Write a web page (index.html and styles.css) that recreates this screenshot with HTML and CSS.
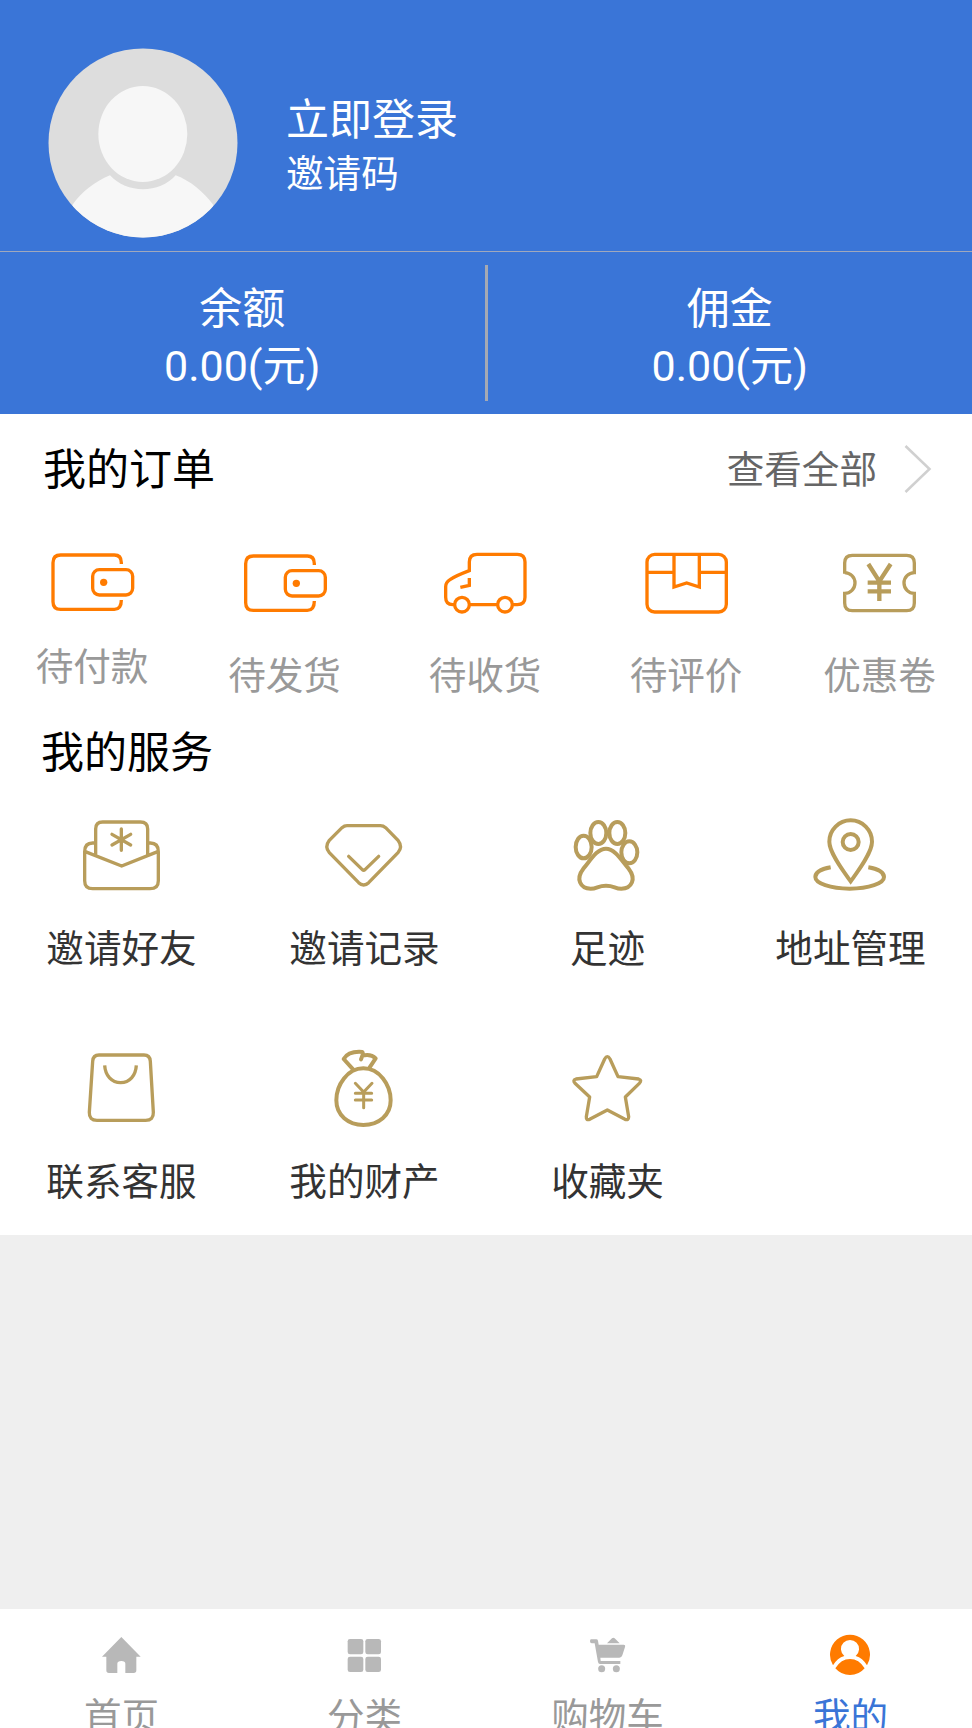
FILE: index.html
```html
<!DOCTYPE html>
<html lang="zh-CN">
<head>
<meta charset="utf-8">
<title>我的</title>
<link rel="stylesheet" href="styles.css">
</head>
<body>
<div class="page">
  <header class="profile">
    <svg class="avatar" viewBox="145 144 570 570">
      <defs><clipPath id="disc"><circle cx="430" cy="429" r="283.500"/></clipPath></defs>
      <g clip-path="url(#disc)">
        <rect x="145" y="144" width="570" height="570" fill="#ddd"/>
        <ellipse cx="429.500" cy="402" rx="133.500" ry="144" fill="#f7f7f7"/>
        <path d="M218 615C247 575 285 545 331 526C356 554 393 568 430 568C467 568 504 554 528 526C573 543 611 575 641 615V720H218Z" fill="#f7f7f7"/>
      </g>
    </svg>
    <div class="who">
      <div class="login">立即登录</div>
      <div class="code">邀请码</div>
    </div>
  </header>
  <section class="wallet">
    <div class="sum"><div>余额</div><div class="amount">0.00(元)</div></div>
    <div class="rule"></div>
    <div class="sum"><div>佣金</div><div class="amount">0.00(元)</div></div>
  </section>
  <main class="panel">
    <div class="head">
      <h2 class="title">我的订单</h2>
      <a class="all"><span>查看全部</span>
        <svg class="chevron" viewBox="0 0 30 50"><path d="M3.500 2L27.500 25L3.500 48" fill="none" stroke="#d0d0d0" stroke-width="2.500"/></svg>
      </a>
    </div>
    <nav class="orders">
      <div class="order first">
        <svg class="oicon" viewBox="141 87 270 198"><path d="M364 132V128Q364 105 343 105H182Q159 105 159 128V245Q159 268 182 268H343Q364 268 364 240"/><rect x="278" y="149" width="120" height="76" rx="20"/><circle class="dot" cx="311" cy="187" r="11"/></svg>
        <span>待付款</span>
      </div>
      <div class="order">
        <svg class="oicon" viewBox="720 84 270 198"><path d="M943 132V128Q943 105 922 105H760Q737 105 737 128V245Q737 268 760 268H922Q943 268 943 240"/><rect x="856" y="149" width="120" height="76" rx="20"/><circle class="dot" cx="889" cy="187" r="11"/></svg>
        <span>待发货</span>
      </div>
      <div class="order">
        <svg class="oicon" viewBox="1322 87 270 198"><path d="M1365 254H1360Q1339 254 1339 232V200Q1339 187 1352 179Q1370 167 1410 152V126Q1410 103 1433 103H1554Q1577 103 1577 126V232Q1577 254 1554 254H1540M1411 254H1493M1410 174V196L1383 202"/><circle cx="1388" cy="254" r="22"/><circle cx="1517" cy="254" r="22"/></svg>
        <span>待收货</span>
      </div>
      <div class="order">
        <svg class="oicon" viewBox="507 87 270 198"><rect x="525" y="103" width="238" height="173" rx="23"/><path d="M525 157H606M682 157H763M606 103V201L644 189L682 201V103"/></svg>
        <span>待评价</span>
      </div>
      <div class="order">
        <svg class="oicon gold" viewBox="1089 87 270 198"><path d="M1118 161V129Q1118 106 1141 106H1304Q1327 106 1327 129V158A31 31 0 0 0 1327 220V249Q1327 272 1304 272H1141Q1118 272 1118 249V220A31 31 0 0 0 1118 158Z"/><path class="yen" d="M1189 132L1222 184L1256 132M1222 184V243M1187 188H1257M1187 214H1257"/></svg>
        <span>优惠卷</span>
      </div>
    </nav>
    <h2 class="title services-title">我的服务</h2>
    <nav class="services">
      <div class="service">
        <svg class="sicon" viewBox="230 30 270 270"><path d="M286 165V87Q286 66 307 66H420Q442 66 442 87V165M286 129H277Q253 129 253 155V242Q253 266 277 266H449Q474 266 474 242V155Q474 129 450 129H442M253 154L364 198L474 154"/><path stroke-linecap="round" d="M363 87V151M335 103L391 135M391 103L335 135"/></svg>
        <span>邀请好友</span>
      </div>
      <div class="service">
        <svg class="sicon" viewBox="959 30 270 270"><path d="M1040 77H1140Q1149 77 1156 83L1193 121Q1208 141 1193 158L1105 248Q1090 262 1075 248L987 158Q972 141 987 121L1025 83Q1032 77 1040 77Z"/><path stroke-linecap="round" stroke-linejoin="round" d="M1045 169L1086 209Q1090 212 1094 209L1135 169"/></svg>
        <span>邀请记录</span>
      </div>
      <div class="service">
        <svg class="sicon bold" viewBox="272 30 270 270"><ellipse cx="334" cy="141" rx="24" ry="34"/><ellipse cx="378" cy="99" rx="24" ry="33"/><ellipse cx="435" cy="99" rx="24" ry="33"/><ellipse cx="471" cy="157" rx="24" ry="33"/><path d="M401 146C374 146 355 180 333 206C309 237 324 266 355 266C375 266 376 257 401 257C426 257 427 266 447 266C478 266 493 237 469 206C447 180 427 146 401 146Z"/></svg>
        <span>足迹</span>
      </div>
      <div class="service">
        <svg class="sicon bold" viewBox="1001 30 270 270"><path d="M1135 244C1115 216 1071 159 1071 125A64 64 0 0 1 1199 125C1199 159 1155 216 1135 244Z"/><circle cx="1135" cy="126" r="24"/><path d="M1075 202C1047 207 1029 217 1029 231C1029 250 1074 266 1132 266C1190 266 1235 250 1235 231C1235 217 1217 207 1188 202"/></svg>
        <span>地址管理</span>
      </div>
      <div class="service">
        <svg class="sicon" viewBox="230 39 270 270"><path d="M296 75H431Q449 75 450 94L459 247Q460 271 436 271H290Q266 271 267 247L277 94Q278 75 296 75Z"/><path d="M313 106C315 137 334 158 361 158C388 158 406 137 408 106"/></svg>
        <span>联系客服</span>
      </div>
      <div class="service">
        <svg class="sicon bold" viewBox="-1 39 270 270"><path d="M129 115C82 115 48 164 48 211C48 256 84 285 129 285C175 285 211 256 211 211C211 164 177 115 129 115Z"/><path stroke-linejoin="round" stroke-linecap="round" d="M99 119L70 87C80 70 101 64 126 66L128 72L122 88M126 77C144 73 157 76 166 85L148 112"/><path class="thin" stroke-linecap="round" d="M105 160L130 186L155 160M130 186V233M105 190H154M105 210H154"/></svg>
        <span>我的财产</span>
      </div>
      <div class="service">
        <svg class="sicon" viewBox="728 39 270 270"><path stroke-linejoin="round" d="M853 87Q861 73 869 87L893 140L955 147Q966 150 957 160L915 201L925 260Q925 272 914 268L861 240L808 268Q797 272 798 260L808 201L764 160Q756 150 767 147L829 140Z"/></svg>
        <span>收藏夹</span>
      </div>
    </nav>
  </main>
  <footer class="tabs">
    <div class="tab">
      <svg class="ticon" viewBox="290 90 150 150"><path d="M363 111L421 170H408V211Q408 219 400 219H375V191Q375 183 363 183Q351 183 351 191V219H326Q318 219 318 211V170H305Z"/></svg>
      <span>首页</span>
    </div>
    <div class="tab">
      <svg class="ticon" viewBox="1019 90 150 150"><rect x="1042" y="117" width="47" height="46" rx="7"/><rect x="1095" y="117" width="47" height="46" rx="7"/><rect x="1042" y="170" width="47" height="46" rx="7"/><rect x="1095" y="170" width="47" height="46" rx="7"/></svg>
      <span>分类</span>
    </div>
    <div class="tab">
      <svg class="ticon" viewBox="290 90 150 150"><path d="M314 118H330Q334 118 335 122L337 134H412Q418 134 416 141L408 166Q406 173 399 173H342L343 183H402V192H341Q336 192 335 186L325 130H316Q311 130 311 124Q311 118 314 118ZM362 130L377 115Q381 112 385 115L400 130Z"/><circle cx="346" cy="206" r="10.500"/><circle cx="390" cy="206" r="10.500"/></svg>
      <span>购物车</span>
    </div>
    <div class="tab active">
      <svg class="ticon" viewBox="1019 90 150 150"><path d="M1040 196A60 60 0 1 1 1142 196Q1129 174 1108 168A27 27 0 1 0 1074 168Q1053 174 1040 196ZM1047 205Q1064 177 1091 177Q1118 177 1135 205Q1118 225 1091 225Q1064 225 1047 205Z"/></svg>
      <span>我的</span>
    </div>
  </footer>
</div>
</body>
</html>
```
FILE: styles.css
```css
* { box-sizing: border-box; }
body {
  margin: 0;
  background: #efefef;
  font-family: "Noto Sans CJK SC", sans-serif;
  font-size: 37.6px;
  font-weight: 400;
}
.page {
  width: 972px;
  height: 1728px;
  display: flex;
  flex-direction: column;
  overflow: hidden;
}
svg { display: block; flex: none; }
.profile {
  height: 252px;
  flex: none;
  display: flex;
  padding: 48px 0 0 48px;
  background: #3a75d7;
  border-bottom: 1px solid #a0a8bc;
  color: #fff;
}
.avatar { width: 190px; height: 190px; }
.who { padding: 41px 0 0 48px; line-height: 54px; }
.login { font-size: 43px; line-height: 55px; }
.wallet {
  height: 162px;
  flex: none;
  display: flex;
  padding-top: 13px;
  background: #3a75d7;
  color: #fff;
  font-size: 43px;
}
.sum { flex: 1; padding-top: 10px; text-align: center; line-height: 61px; }
.amount { font-family: Roboto, "Noto Sans CJK SC", sans-serif; }
.rule { width: 3px; height: 136px; background: #a5a9b3; }
.panel { height: 821px; flex: none; background: #fff; }
.head {
  height: 109px;
  display: flex;
  justify-content: space-between;
  align-items: center;
  padding: 0 40px 0 43px;
}
.title { margin: 0; font-size: 43px; font-weight: 400; line-height: 60px; color: #000; }
.head .title { padding-bottom: 6px; }
.all { display: flex; align-items: center; color: #666; line-height: 60px; }
.all span { padding-bottom: 4px; }
.chevron { width: 30px; height: 50px; margin-left: 25px; }
.orders {
  height: 196px;
  display: grid;
  grid-template-columns: 184px 201px 200px 202px 185px;
  padding-top: 26px;
  color: #999;
}
.order { display: flex; flex-direction: column; align-items: center; line-height: 54px; }
.order span { margin-top: 31px; }
.first span { margin-top: 22px; }
.oicon { width: 90px; height: 66px; fill: none; stroke: #ff7b00; stroke-width: 10; }
.dot { fill: #ff7b00; stroke: none; }
.gold { stroke: #b89d5b; }
.yen { stroke-width: 13; }
.services-title { padding-left: 41px; }
.services { display: grid; grid-template-columns: repeat(4, 243px); grid-auto-rows: 233px; padding-top: 31px; color: #333; }
.service { display: flex; flex-direction: column; align-items: center; line-height: 54px; }
.service span { margin-top: 19px; }
.sicon { width: 90px; height: 90px; fill: none; stroke: #b89d5b; stroke-width: 10; }
.bold { stroke-width: 12; }
.thin { stroke-width: 9; }
.tabs {
  height: 119px;
  flex: none;
  margin-top: auto;
  display: grid;
  grid-template-columns: repeat(4, 243px);
  padding-top: 21px;
  background: #fff;
  color: #999;
}
.tab { display: flex; flex-direction: column; align-items: center; line-height: 54px; }
.tab span { margin-top: 7px; }
.ticon { width: 50px; height: 50px; fill: #b8b8b8; }
.active { color: #3a75d7; }
.active .ticon { fill: #ff7b00; }
```
